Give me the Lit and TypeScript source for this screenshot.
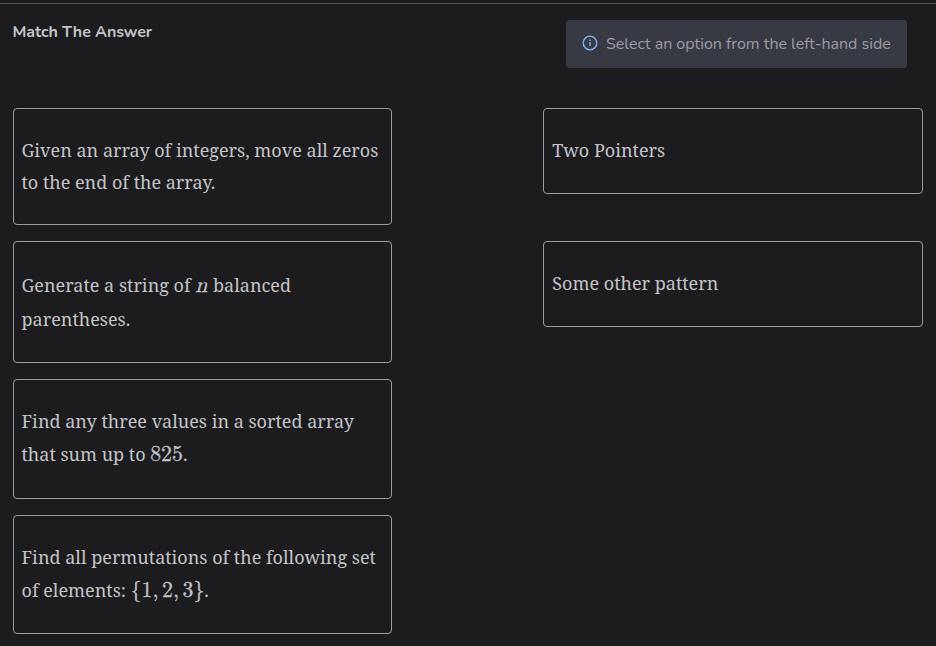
import { LitElement, html, css, TemplateResult } from "lit";
import { customElement } from "lit/decorators.js";

@customElement("app-root")
export class AppRoot extends LitElement {
  static styles = css`
    :host {
      display: block;
      height: 646px;
      overflow: hidden;
      box-sizing: border-box;
      padding-top: 3px;
      background: #1c1c1e;
      color: #c4c4c8;
      font-family: Nunito, "Open Sans", sans-serif;
    }
    .header {
      display: flex;
      justify-content: space-between;
      align-items: flex-start;
      height: 105px;
      box-sizing: border-box;
      border-top: 1px solid #505053;
      padding: 16px 29px 0 12.5px;
    }
    .title {
      margin: 0;
      font-size: 16px;
      line-height: 24px;
      font-weight: 700;
      letter-spacing: -0.06px;
    }
    .hint {
      display: flex;
      align-items: center;
      gap: 8px;
      box-sizing: border-box;
      width: 341px;
      height: 48px;
      padding: 0 16px;
      border-radius: 4px;
      background: #383a43;
      color: #9c9ca4;
      font-size: 16px;
      line-height: 24px;
      white-space: nowrap;
    }
    .icon {
      flex: none;
      width: 16px;
      height: 16px;
      margin-bottom: 2px;
    }
    .board {
      display: grid;
      grid-template-columns: 379px 380px;
      grid-template-rows: 117px 122px 120px 119px;
      column-gap: 151px;
      row-gap: 16px;
      padding-left: 13px;
    }
    .card {
      box-sizing: border-box;
      align-self: stretch;
      padding: 25px 7.5px;
      border: 1px solid #9b9ba1;
      border-radius: 4px;
      font-family: "Noto Serif", serif;
      font-size: 18px;
      line-height: 32px;
      white-space: nowrap;
    }
    .option {
      align-self: start;
      height: 86px;
      padding-left: 8.3px;
    }
    .roomy {
      padding-top: 26px;
      line-height: 34px;
    }
    .loose {
      line-height: 33px;
    }
    .math {
      font-family: KaTeX_Main, "Latin Modern Roman", "CMU Serif", "Liberation Serif", serif;
      font-size: 21.78px;
      line-height: 1;
      -webkit-text-stroke: 0.3px currentColor;
    }
    .variable {
      font-family: KaTeX_Math, "Latin Modern Math", "CMU Serif", "Liberation Serif", serif;
      font-style: italic;
      display: inline-block;
      width: 13px;
    }
    .comma {
      margin-right: 3.6px;
    }
  `;

  private math(content: unknown): TemplateResult {
    return html`<span class="math">${content}</span>`;
  }

  render() {
    const comma = html`<span class="comma">,</span>`;
    return html`
      <header class="header">
        <h1 class="title">Match The Answer</h1>
        <div class="hint">
          <svg class="icon" viewBox="0 0 16 16" fill="none" stroke="#84b8f4">
            <circle cx="8" cy="8" r="6.8" stroke-width="1.3" />
            <path d="M8 7.1V11" stroke-width="1.4" />
            <path d="M8 4.6V6" stroke-width="1.4" />
          </svg>
          <span>Select an option from the left-hand side</span>
        </div>
      </header>
      <main class="board">
        <div class="card">Given an array of integers, move all zeros<br />to the end of the array.</div>
        <div class="card option">Two Pointers</div>
        <div class="card roomy">Generate a string of <span class="math variable">n</span> balanced<br />parentheses.</div>
        <div class="card option">Some other pattern</div>
        <div class="card loose">Find any three values in a sorted array<br />that sum up to ${this.math("825")}.</div>
        <div></div>
        <div class="card loose">Find all permutations of the following set<br />of elements: ${this.math(html`{1${comma}2${comma}3}`)}.</div>
      </main>
    `;
  }
}
